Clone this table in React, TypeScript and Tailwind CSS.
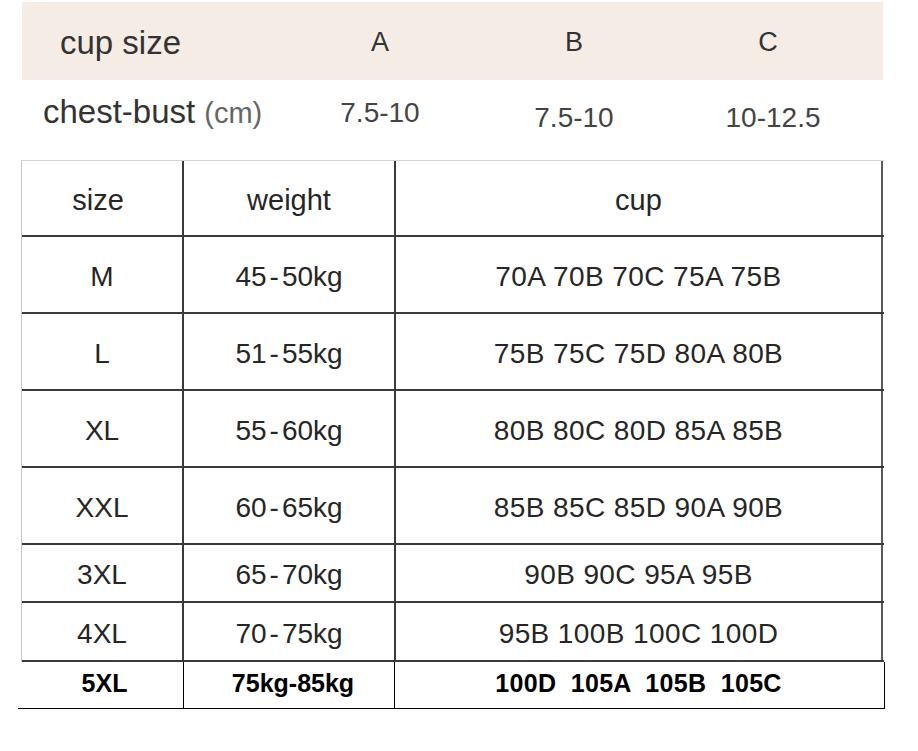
import React from "react";

/* Size chart: cup-size band on top, then the size / weight / cup table */

const ROWS = [
  { size: "M", from: "45", to: "50", cups: "70A 70B 70C 75A 75B", h: "h-[77px]" },
  { size: "L", from: "51", to: "55", cups: "75B 75C 75D 80A 80B", h: "h-[77px]" },
  { size: "XL", from: "55", to: "60", cups: "80B 80C 80D 85A 85B", h: "h-[77px]" },
  { size: "XXL", from: "60", to: "65", cups: "85B 85C 85D 90A 90B", h: "h-[77px]" },
  { size: "3XL", from: "65", to: "70", cups: "90B 90C 95A 95B", h: "h-[58px]" },
  { size: "4XL", from: "70", to: "75", cups: "95B 100B 100C 100D", h: "h-[59px]" },
];

const SANS = "font-['Liberation_Sans',Arial,sans-serif]";

function Weight({ from, to }: { from: string; to: string }) {
  return (
    <span>
      {from}
      <span className="mx-[3px]">-</span>
      {to}kg
    </span>
  );
}

export default function App() {
  return (
    <div className={`h-[751px] w-[918px] overflow-hidden bg-white text-[#333] ${SANS}`}>
      {/* ── Cup size band ── */}
      <div className="ml-[22px] mt-[2px] flex h-[78px] w-[861px] items-center bg-[#f5ece5]">
        <div className="w-[261px] pl-[38px] text-[33px] leading-none pt-[2px]">cup size</div>
        <div className="w-[194px] text-center text-[27px] leading-none pt-[2px]">A</div>
        <div className="w-[194px] text-center text-[27px] leading-none pt-[2px]">B</div>
        <div className="w-[194px] text-center text-[27px] leading-none pt-[2px]">C</div>
      </div>

      {/* ── Chest-bust row ── */}
      <div className="ml-[22px] flex h-[80px] w-[861px] items-start">
        <div className="w-[261px] pl-[21px] pt-[15px] leading-none whitespace-nowrap">
          <span className="text-[33px]">chest-bust</span>
          <span className="ml-[9px] text-[29px] text-[#666]">(cm)</span>
        </div>
        <div className="w-[194px] pt-[19px] text-center text-[28px] leading-none text-[#444]">7.5-10</div>
        <div className="w-[194px] pt-[24px] text-center text-[28px] leading-none text-[#444]">7.5-10</div>
        <div className="w-[194px] pt-[24px] pl-[10px] text-center text-[28px] leading-none text-[#444]">10-12.5</div>
      </div>

      {/* ── Size table ── */}
      <div className="ml-[21px] w-[863px] border-l border-t border-l-[#c8c8c8] border-t-[#d4d4d4] text-[#262626]">
        <div className="grid h-[76px] grid-cols-[162px_212px_487px] border-b-2 border-[#3a3a3a] text-[29px]">
          <div className="flex items-center justify-center border-r-2 border-[#3a3a3a] pt-[6px] pr-[8px]">size</div>
          <div className="flex items-center justify-center border-r-2 border-[#3a3a3a] pt-[6px]">weight</div>
          <div className="flex items-center justify-center border-r-2 border-[#5a5a5a] pt-[6px]">cup</div>
        </div>
        {ROWS.map((r) => (
          <div
            key={r.size}
            className={`grid grid-cols-[162px_212px_487px] border-b-2 border-[#3a3a3a] text-[28px] ${r.h}`}
          >
            <div className="flex items-center justify-center border-r-2 border-[#3a3a3a] pt-[4px]">{r.size}</div>
            <div className="flex items-center justify-center border-r-2 border-[#3a3a3a] pt-[4px]">
              <Weight from={r.from} to={r.to} />
            </div>
            <div className="flex items-center justify-center border-r-2 border-[#5a5a5a] pt-[4px] tracking-[0.4px]">
              {r.cups}
            </div>
          </div>
        ))}
      </div>

      {/* ── 5XL row (bold, thin black rules) ── */}
      <div className="ml-[18px] grid h-[47px] w-[867px] grid-cols-[166px_211px_490px] border-b border-black text-[25px] font-bold text-black">
        <div className="flex items-center justify-center border-r border-black pl-[8px] pb-[2px]">5XL</div>
        <div className="flex items-center justify-center border-r border-black pl-[8px] pb-[2px]">75kg-85kg</div>
        <div className="flex items-center justify-center whitespace-pre border-r border-black pr-[2px] pb-[2px] tracking-[0.3px]">
          100D  105A  105B  105C
        </div>
      </div>
    </div>
  );
}
